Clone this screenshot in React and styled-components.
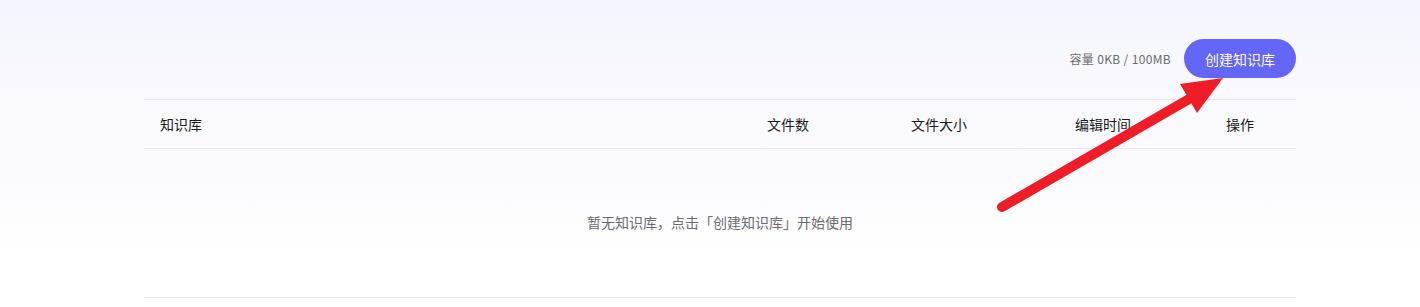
import styled, { createGlobalStyle } from 'styled-components';

const GlobalStyle = createGlobalStyle`
  html, body {
    margin: 0;
    padding: 0;
  }
  body {
    font-family: "Noto Sans CJK SC", "Noto Sans", sans-serif;
    background: #ffffff;
  }
`;

const Page = styled.div`
  position: relative;
  height: 307px;
  overflow: hidden;
  background: linear-gradient(180deg, #f5f5fd 0%, #fafafe 45%, #ffffff 85%);
`;

const Content = styled.div`
  width: 1152px;
  margin-left: 144px;
`;

const TopBar = styled.div`
  display: flex;
  justify-content: flex-end;
  align-items: center;
  gap: 13px;
  padding-top: 39px;
  padding-bottom: 21px;
`;

const Capacity = styled.span`
  font-size: 12px;
  letter-spacing: 0.35px;
  color: #6b6b73;
`;

const CreateButton = styled.button`
  width: 112px;
  height: 39px;
  border: none;
  border-radius: 20px;
  background: #6466f8;
  color: #ffffff;
  font-family: inherit;
  font-size: 14px;
  cursor: pointer;
`;

const Table = styled.div`
  border-top: 1px solid #e6e6ec;
  border-bottom: 1px solid #e6e6ec;
`;

const HeadRow = styled.div`
  display: grid;
  grid-template-columns: 607px 144px 164px 151px 86px;
  height: 48px;
  align-items: center;
  border-bottom: 1px solid #e6e6ec;
`;

const HeadCell = styled.div`
  padding-left: 16px;
  font-size: 14px;
  color: #1a1a1f;
`;

const Empty = styled.div`
  height: 148px;
  display: flex;
  align-items: center;
  justify-content: center;
  font-size: 14px;
  color: #6b6b73;
  padding-bottom: 3px;
  box-sizing: border-box;
`;

const Arrow = styled.svg`
  position: absolute;
  left: 0;
  top: 0;
  pointer-events: none;
`;

const columns = ['知识库', '文件数', '文件大小', '编辑时间', '操作'];

export default function App() {
  return (
    <>
      <GlobalStyle />
      <Page>
        <Content>
          <TopBar>
            <Capacity>容量 0KB / 100MB</Capacity>
            <CreateButton>创建知识库</CreateButton>
          </TopBar>
          <Table>
            <HeadRow>
              {columns.map((c) => (
                <HeadCell key={c}>{c}</HeadCell>
              ))}
            </HeadRow>
            <Empty>暂无知识库，点击「创建知识库」开始使用</Empty>
          </Table>
        </Content>
        <Arrow width="1420" height="307" viewBox="0 0 1420 307">
          <line x1="1002" y1="207" x2="1196" y2="95" stroke="#ee1d27" strokeWidth="10" strokeLinecap="round" />
          <polygon points="1180,84 1223,78 1197,113" fill="#ee1d27" />
        </Arrow>
      </Page>
    </>
  );
}
